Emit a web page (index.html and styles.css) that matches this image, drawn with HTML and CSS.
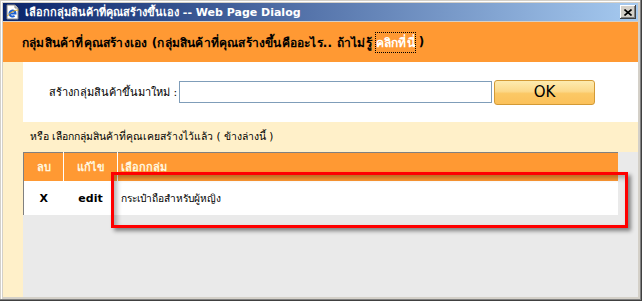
FILE: index.html
```html
<!DOCTYPE html>
<html lang="th">
<head>
  <meta charset="UTF-8">
  <title>เลือกกลุ่มสินค้าที่คุณสร้างขึ้นเอง -- Web Page Dialog</title>
  <link rel="stylesheet" href="styles.css">
</head>
<body>

<div class="window">
  <div class="titlebar">
    <svg class="app-icon" width="16" height="16" viewBox="0 0 16 16">
      <path d="M2 1h8l3 3v11H2z" fill="#fff" stroke="#8a8a8a"/>
      <path d="M10 1v3h3" fill="#e0e0e0" stroke="#8a8a8a"/>
      <path d="M4.5 9.5h6a3 3 0 1 0-1 2.3" fill="none" stroke="#1c5fd0" stroke-width="2"/>
      <path d="M2.5 12c2-3 7-6 11-6" fill="none" stroke="#e8b020" stroke-width="1"/>
    </svg>
    <span class="title">เลือกกลุ่มสินค้าที่คุณสร้างขึ้นเอง -- Web Page Dialog</span>
    <button class="close-btn" aria-label="Close">
      <svg width="8" height="7" viewBox="0 0 8 7"><path d="M0.5 0.5l7 6M7.5 0.5l-7 6" stroke="#000" stroke-width="1.6"/></svg>
    </button>
  </div>

  <div class="head">
    กลุ่มสินค้าที่คุณสร้างเอง (กลุ่มสินค้าที่คุณสร้างขึ้นคืออะไร.. ถ้าไม่รู้ <a href="#" class="help-link">คลิกที่นี่</a> )
  </div>

  <div class="content">
    <div class="page">
      <div class="create">
        <label for="groupName">สร้างกลุ่มสินค้าขึ้นมาใหม่ :</label>
        <input type="text" id="groupName">
        <button class="ok-btn">OK</button>
      </div>

      <div class="hint">หรือ เลือกกลุ่มสินค้าที่คุณเคยสร้างไว้แล้ว ( ข้างล่างนี้ )</div>

      <table class="groups">
        <thead>
          <tr>
            <th class="col-del">ลบ</th>
            <th class="col-edit">แก้ไข</th>
            <th class="col-name">เลือกกลุ่ม</th>
          </tr>
        </thead>
        <tbody>
          <tr>
            <td class="col-del"><b>X</b></td>
            <td class="col-edit"><b>edit</b></td>
            <td class="col-name">กระเป๋าถือสำหรับผู้หญิง</td>
          </tr>
        </tbody>
      </table>
    </div>
  </div>

  <!-- annotation box -->
  <div class="highlight"></div>
</div>

</body>
</html>
```

FILE: styles.css
```css
body {
  margin: 0;
  font-family: Tahoma, "DejaVu Sans", sans-serif;
  font-size: 11px;
  color: #000;
}
.window {
  position: relative;
  width: 642px;
  height: 301px;
  box-sizing: border-box;
  padding: 3px 4px 4px 3px;
  background: #d4d0c8;
  box-shadow: inset -1px -1px #404040, inset -2px -2px #808080, inset 1px 1px #d4d0c8, inset 2px 2px #fff;
  display: flex;
  flex-direction: column;
  overflow: hidden;
}

/* Title bar */
.titlebar {
  height: 18px;
  margin-bottom: 1px;
  background: linear-gradient(to right, #0a246a, #a6caf0);
  display: flex;
  align-items: center;
  padding: 0 2px 0 2px;
}
.app-icon {
  flex: none;
}
.title {
  margin-left: 4px;
  color: #fff;
  font-weight: bold;
  font-size: 11px;
  white-space: nowrap;
}
.close-btn {
  margin-left: auto;
  width: 16px;
  height: 14px;
  padding: 0;
  border: none;
  background: #d4d0c8;
  box-shadow: inset -1px -1px #404040, inset 1px 1px #fff, inset -2px -2px #808080;
  display: flex;
  align-items: center;
  justify-content: center;
}

/* Orange heading */
.head {
  height: 40px;
  background: #ff9933;
  display: flex;
  align-items: center;
  padding-left: 19px;
  font-size: 12px;
  letter-spacing: 0.2px;
  font-weight: bold;
  white-space: nowrap;
}
.help-link {
  color: #fff;
  text-decoration: none;
  margin: 0 4px 0 4px;
  outline: 1px dotted #000;
}

.content {
  flex: 1;
  display: flex;
  background: #fff0c9;
  padding-left: 20px;
}
.page {
  flex: 1;
  background: #eaeaea;
}

/* New group row */
.create {
  height: 60px;
  background: #fff;
  display: flex;
  align-items: center;
  padding-left: 26px;
}
.create label {
  width: 130px;
  white-space: nowrap;
  font-size: 11px;
}
.create input {
  width: 313px;
  height: 22px;
  box-sizing: border-box;
  border: 1px solid #7f9db9;
  margin: 0;
}
.ok-btn {
  margin-left: 2px;
  width: 101px;
  height: 25px;
  border: 1px solid #d39a35;
  border-radius: 3px;
  background: linear-gradient(#fdebb0 0%, #fcd98a 45%, #fbc865 55%, #fbc15a 100%);
  font-family: Tahoma, "DejaVu Sans", sans-serif;
  font-size: 15px;
  color: #000;
  padding: 0;
}

.hint {
  height: 30px;
  background: #fff0c9;
  padding-left: 7px;
  line-height: 28px;
  font-size: 10.4px;
  white-space: nowrap;
}

/* Group table */
.groups {
  width: 595px;
  border-collapse: collapse;
  border-left: 1px solid #808080;
  border-top: 1px solid #808080;
}
.groups th {
  height: 28px;
  background: #ff9933;
  color: #fff8e0;
  font-size: 11px;
  font-weight: bold;
  padding: 0;
  border-right: 1px solid #fff;
}
.groups td {
  height: 34px;
  background: #fff;
  padding: 0;
  font-size: 11px;
}
.col-del {
  width: 39px;
  text-align: center;
}
.col-edit {
  width: 53px;
  text-align: center;
}
.groups .col-name {
  text-align: left;
  padding-left: 3px;
  border-right: none;
}
.groups td.col-name {
  font-size: 10.2px;
}

/* Red annotation */
.highlight {
  position: absolute;
  left: 111px;
  top: 172px;
  width: 517px;
  height: 56px;
  box-sizing: border-box;
  border: 3px solid #ff0000;
  box-shadow: 3px 3px 4px rgba(0, 0, 0, 0.45), inset 3px 3px 5px rgba(0, 0, 0, 0.3);
}
```
